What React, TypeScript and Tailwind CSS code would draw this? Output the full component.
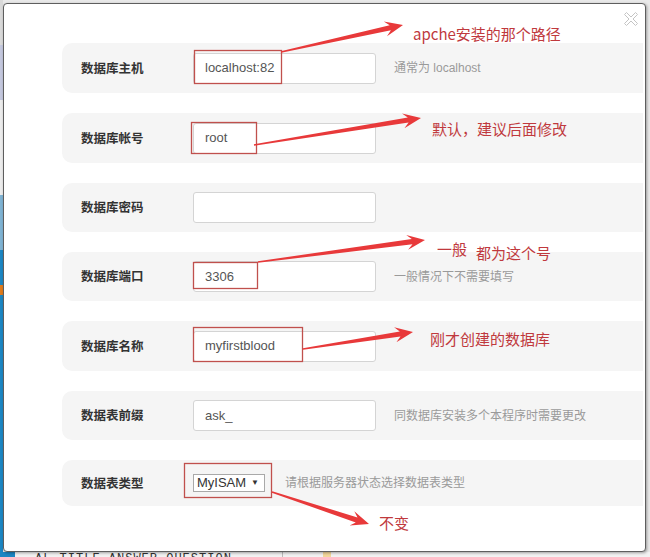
import React from "react";

type Pt = [number, number];

function arrowPoints(s: Pt, t: Pt): string {
  const dx = t[0] - s[0];
  const dy = t[1] - s[1];
  const len = Math.sqrt(dx * dx + dy * dy);
  const ux = dx / len;
  const uy = dy / len;
  const nx = -uy;
  const ny = ux;
  const at = (base: Pt, back: number, side: number): string =>
    `${(base[0] - ux * back + nx * side).toFixed(1)},${(base[1] - uy * back + ny * side).toFixed(1)}`;
  const pts = [
    at(s, 0, 0.8),
    at(t, 13, 2.6),
    at(t, 18, 7.5),
    at(t, 0, 0),
    at(t, 18, -7.5),
    at(t, 13, -2.6),
    at(s, 0, -0.8),
  ];
  return pts.join(" ");
}

const arrows: [Pt, Pt][] = [
  [[281, 52], [403, 25]],
  [[254, 145], [421, 118]],
  [[258, 262], [425, 240]],
  [[303, 349], [413, 332]],
  [[272, 492], [369, 524]],
];

const boxes = [
  { x: 194.5, y: 50.5, w: 87, h: 33 },
  { x: 191.5, y: 122.5, w: 65, h: 31 },
  { x: 193.5, y: 262.5, w: 64, h: 26 },
  { x: 193.5, y: 327.5, w: 109, h: 34 },
  { x: 184.5, y: 463.5, w: 87, h: 34 },
];

const cjk = { fontFamily: '"Noto Sans CJK SC", "Noto Sans", sans-serif' };
const latin = { fontFamily: '"Liberation Sans", Arial, "Noto Sans CJK SC", sans-serif' };

function Row({
  label,
  value,
  help,
  h,
  select,
}: {
  label: string;
  value?: string;
  help?: string;
  h: string;
  select?: boolean;
}) {
  return (
    <div className={`flex items-center rounded-l-[10px] bg-[#f5f5f5] pl-[19px] ${h}`}>
      <div className="w-[112px] shrink-0 text-[12.5px] font-bold text-[#333]" style={cjk}>
        {label}
      </div>
      {select ? (
        <div
          className="flex h-[18px] w-[72px] shrink-0 items-center justify-between border border-[#a9a9a9] bg-white pl-[3px] pr-[5px] text-[13px] text-[#333]"
          style={latin}
        >
          <span>MyISAM</span>
          <span className="text-[8px]">▼</span>
        </div>
      ) : (
        <div
          className="flex h-[31px] w-[183px] shrink-0 items-center rounded-[3px] border border-[#d4d4d4] bg-white pl-[11px] text-[13px] text-[#555]"
          style={latin}
        >
          {value}
        </div>
      )}
      {help && (
        <div
          className={`${select ? "ml-[20px]" : "ml-[18px]"} text-[12px] text-[#9a9a9a]`}
          style={latin}
        >
          {help}
        </div>
      )}
    </div>
  );
}

export default function App() {
  return (
    <div className="relative h-[557px] w-[650px] overflow-hidden bg-[#f0f0f0]">
      {/* background page */}
      <div className="flex h-[552px]">
        <div className="flex w-[3px] flex-col">
          <div className="h-[45px] bg-[#d9d9d9]" />
          <div className="h-[55px] bg-[#c4c8de]" />
          <div className="h-[95px] bg-[#ececec]" />
          <div className="h-[55px] bg-[#7fb3d3]" />
          <div className="h-[35px] bg-[#1c86c3]" />
          <div className="h-[10px] bg-[#e07b1c]" />
          <div className="flex-1 bg-[#1c86c3]" />
        </div>
        <div className="flex-1 bg-[#e9e9e9]" />
      </div>
      <div className="flex h-[5px] overflow-hidden bg-[#f2f2f2]">
        <div className="w-[15px] bg-[#1c86c3]" />
        <div
          className="ml-[20px] mt-[1px] text-[12px] leading-none tracking-[1px] text-[#333]"
          style={{ fontFamily: '"Liberation Mono", monospace' }}
        >
          AL TITLE ANSWER_QUESTION
        </div>
        <div className="ml-[50px] w-[1px] bg-[#bbb]" />
        <div className="ml-[40px] w-[8px] bg-[#f3d79a]" />
      </div>

      {/* modal */}
      <div className="absolute left-[3px] top-[3px] h-[549px] w-[643px] rounded-[4px] border border-[#5e5e5e] bg-white shadow-[1px_1px_3px_rgba(0,0,0,0.35)]">
        <div className="flex justify-end pr-[7px] pt-[8px]">
          <svg width="14" height="14" viewBox="0 0 14 14">
            <polygon
              points="0.5,2.5 2.5,0.5 7,5 11.5,0.5 13.5,2.5 9,7 13.5,11.5 11.5,13.5 7,9 2.5,13.5 0.5,11.5 5,7"
              fill="none"
              stroke="#c4c4c4"
              strokeWidth="1"
            />
          </svg>
        </div>
        <div className="flex flex-col gap-[20px] pl-[58px] pr-[2px] pt-[17px]">
          <Row label="数据库主机" value="localhost:82" help="通常为 localhost" h="h-[50px]" />
          <Row label="数据库帐号" value="root" h="h-[50px]" />
          <Row label="数据库密码" value="" h="h-[49px]" />
          <Row label="数据库端口" value="3306" help="一般情况下不需要填写" h="h-[49px]" />
          <Row label="数据库名称" value="myfirstblood" h="h-[50px]" />
          <Row label="数据表前缀" value="ask_" help="同数据库安装多个本程序时需要更改" h="h-[49px]" />
          <Row label="数据表类型" select help="请根据服务器状态选择数据表类型" h="h-[46px]" />
        </div>
      </div>

      {/* annotations */}
      <svg className="pointer-events-none absolute left-0 top-0" width="650" height="557">
        {boxes.map((b, i) => (
          <rect key={i} x={b.x} y={b.y} width={b.w} height={b.h} fill="none" stroke="#c0504d" strokeWidth="1.3" />
        ))}
        {arrows.map(([s, t], i) => (
          <polygon key={i} points={arrowPoints(s, t)} fill="#e8393a" />
        ))}
      </svg>
      <div className="absolute left-[413px] top-[24px] text-[15px] leading-[20px] text-[#c0393d]" style={cjk}>
        apche安装的那个路径
      </div>
      <div className="absolute left-[432px] top-[119px] text-[15px] leading-[20px] text-[#c0393d]" style={cjk}>
        默认，建议后面修改
      </div>
      <div className="absolute left-[437px] top-[239px] text-[15px] leading-[20px] text-[#c0393d]" style={cjk}>
        一般
      </div>
      <div className="absolute left-[476px] top-[243px] text-[15px] leading-[20px] text-[#c0393d]" style={cjk}>
        都为这个号
      </div>
      <div className="absolute left-[430px] top-[329px] text-[15px] leading-[20px] text-[#c0393d]" style={cjk}>
        刚才创建的数据库
      </div>
      <div className="absolute left-[379px] top-[513px] text-[15px] leading-[20px] text-[#c0393d]" style={cjk}>
        不变
      </div>
    </div>
  );
}
